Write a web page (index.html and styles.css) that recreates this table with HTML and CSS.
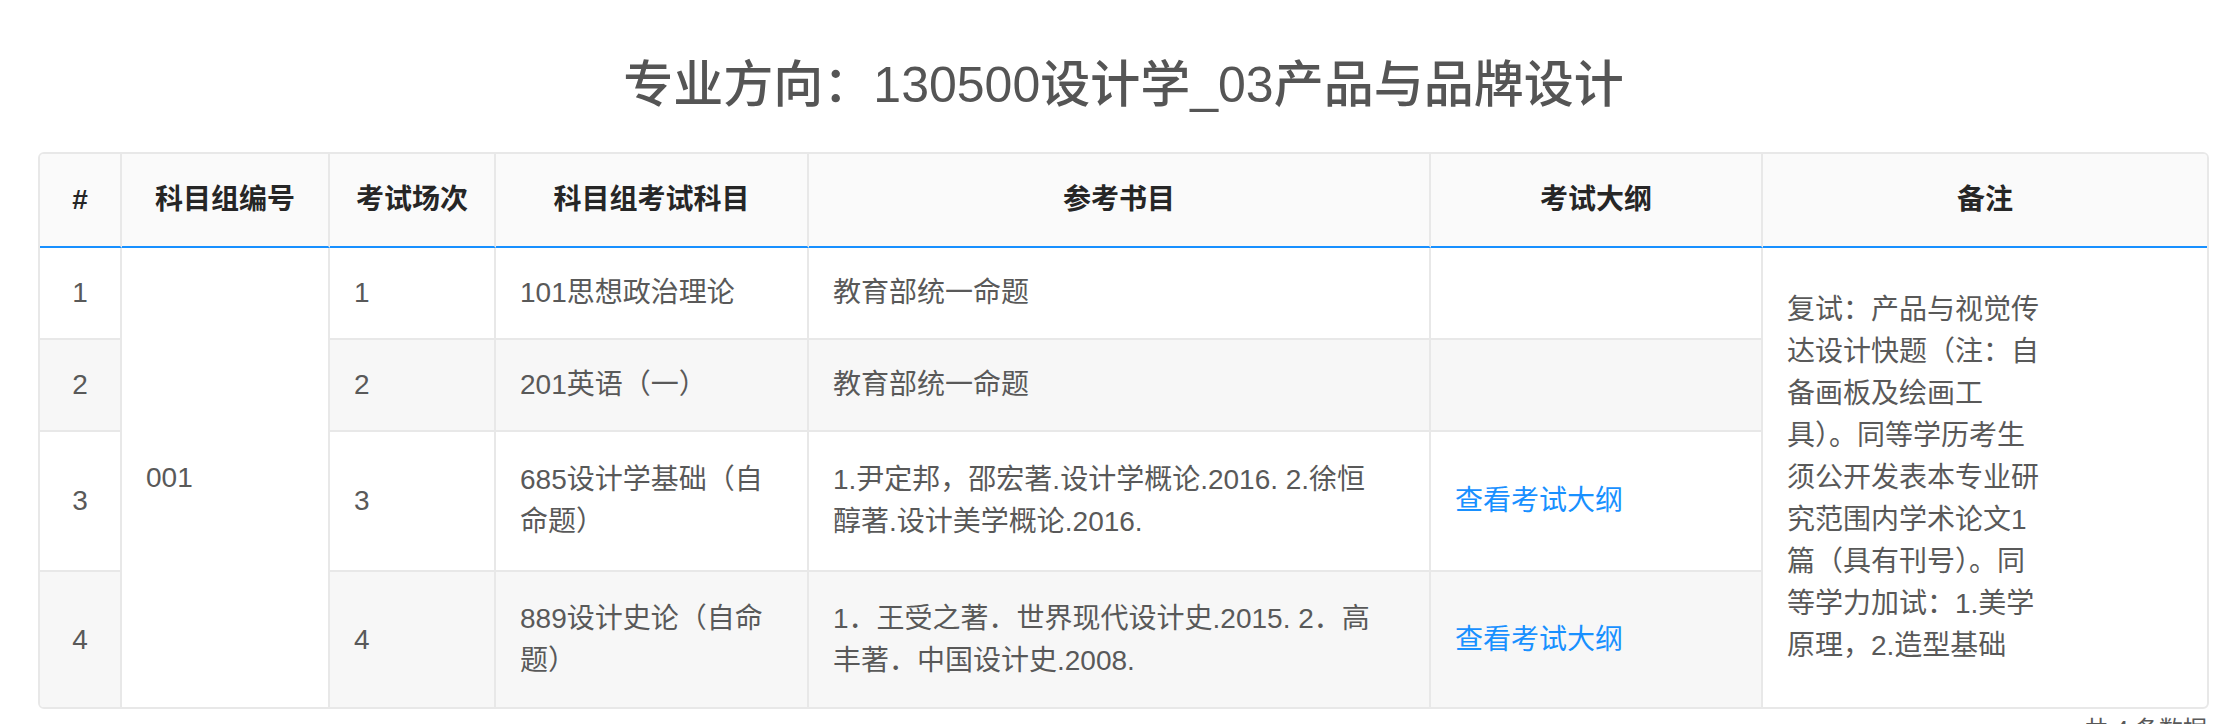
FILE: index.html
```html
<!DOCTYPE html>
<html lang="zh-CN">
<head>
<meta charset="utf-8">
<title>专业方向</title>
<link rel="stylesheet" href="styles.css">
</head>
<body>
<div class="page">
  <h2 class="title">专业方向：130500设计学_03产品与品牌设计</h2>
  <div class="table-wrap">
    <table class="plan">
      <thead>
        <tr>
          <th class="c-idx">#</th>
          <th class="c-group">科目组编号</th>
          <th class="c-round">考试场次</th>
          <th class="c-subject">科目组考试科目</th>
          <th class="c-books">参考书目</th>
          <th class="c-outline">考试大纲</th>
          <th class="c-note">备注</th>
        </tr>
      </thead>
      <tbody>
        <tr class="row-short">
          <td class="idx">1</td>
          <td class="group last" rowspan="4">001</td>
          <td>1</td>
          <td>101思想政治理论</td>
          <td class="books">教育部统一命题</td>
          <td></td>
          <td class="note last" rowspan="4"><div class="note-text">复试：产品与视觉传达设计快题（注：自备画板及绘画工具）。同等学历考生须公开发表本专业研究范围内学术论文1篇（具有刊号）。同等学力加试：1.美学原理，2.造型基础</div></td>
        </tr>
        <tr class="row-short striped">
          <td class="idx">2</td>
          <td>2</td>
          <td>201英语（一）</td>
          <td class="books">教育部统一命题</td>
          <td></td>
        </tr>
        <tr class="row-tall">
          <td class="idx">3</td>
          <td>3</td>
          <td>685设计学基础（自命题）</td>
          <td class="books">1.尹定邦，邵宏著.设计学概论.2016. 2.徐恒醇著.设计美学概论.2016.</td>
          <td><a class="link" href="#">查看考试大纲</a></td>
        </tr>
        <tr class="row-last striped">
          <td class="idx last">4</td>
          <td class="last">4</td>
          <td class="last">889设计史论（自命题）</td>
          <td class="books last">1．王受之著．世界现代设计史.2015. 2．高丰著．中国设计史.2008.</td>
          <td class="last"><a class="link" href="#">查看考试大纲</a></td>
        </tr>
      </tbody>
    </table>
  </div>
  <div class="total">共 4 条数据</div>
</div>
</body>
</html>
```

FILE: styles.css
```css
html, body {
  margin: 0;
  padding: 0;
  background: #ffffff;
}

body {
  font-family: "Liberation Sans", "Noto Sans CJK SC", sans-serif;
  font-size: 28px;
  line-height: 42px;
  color: #595959;
}

.page {
  margin-left: 38px;
  width: 2171px;
  padding-top: 49px;
}

.title {
  margin: 0 0 30px;
  text-align: center;
  font-size: 50px;
  line-height: 73px;
  font-weight: 500;
  color: #555555;
}

.table-wrap {
  border: 2px solid #e8e8e8;
  border-radius: 6px;
  overflow: hidden;
}

.plan {
  width: 100%;
  table-layout: fixed;
  border-collapse: separate;
  border-spacing: 0;
}

.plan th,
.plan td {
  box-sizing: border-box;
  padding: 0 24px;
  border-right: 2px solid #e8e8e8;
  border-bottom: 2px solid #e8e8e8;
  vertical-align: middle;
  text-align: left;
  font-weight: 400;
}

.plan th {
  height: 94px;
  background: #fafafa;
  color: #262626;
  font-weight: 700;
  text-align: center;
  border-bottom: 2px solid #1890ff;
}

.plan th:last-child,
.plan td.note {
  border-right: none;
}

.plan td.last {
  border-bottom: none;
}

.c-idx { width: 82px; }
.c-group { width: 208px; }
.c-round { width: 166px; }
.c-subject { width: 313px; }
.c-books { width: 622px; }
.c-outline { width: 332px; }
.c-note { width: 444px; }

.plan td.idx {
  text-align: center;
  padding: 0;
}

.plan td.books {
  padding-right: 50px;
}

.row-short { height: 92px; }
.row-tall { height: 140px; }
.row-last { height: 135px; }

.striped td {
  background: #f7f7f7;
}

.note {
  padding-bottom: 12px;
}

.note-text {
  width: 260px;
}

.link {
  color: #1890ff;
  text-decoration: none;
}

.total {
  margin-top: 3px;
  text-align: right;
  padding-right: 2px;
  font-size: 24px;
  line-height: 36px;
  color: #595959;
}
```
